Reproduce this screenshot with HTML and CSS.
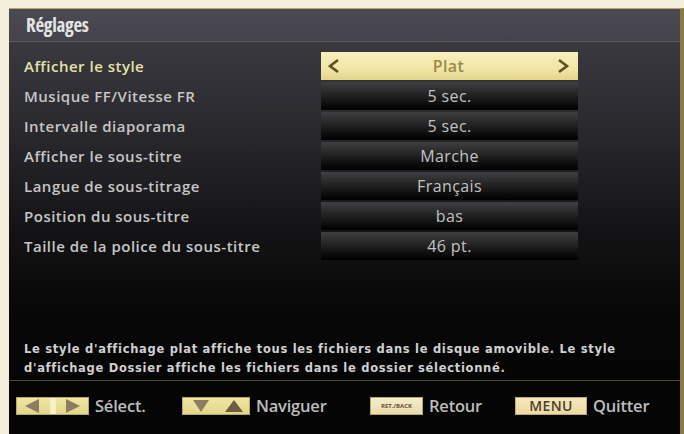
FILE: index.html
```html
<!DOCTYPE html>
<html lang="fr">
<head>
<meta charset="utf-8">
<title>Réglages</title>
<link rel="stylesheet" href="styles.css">
</head>
<body>
<div class="screen">
  <div class="header">Réglages</div>
  <div class="body">
    <div class="rows">
      <div class="row active">
        <div class="label">Afficher le style</div>
        <div class="value sel">
          <svg class="chev" width="12" height="16" viewBox="0 0 12 16"><polyline points="10,2 2,8 10,14" fill="none" stroke="#5f4f20" stroke-width="2.6" stroke-linejoin="miter"/></svg>
          <span class="v">Plat</span>
          <svg class="chev" width="12" height="16" viewBox="0 0 12 16"><polyline points="2,2 10,8 2,14" fill="none" stroke="#5f4f20" stroke-width="2.6" stroke-linejoin="miter"/></svg>
        </div>
      </div>
      <div class="row">
        <div class="label">Musique FF/Vitesse FR</div>
        <div class="value"><span class="v">5 sec.</span></div>
      </div>
      <div class="row">
        <div class="label">Intervalle diaporama</div>
        <div class="value"><span class="v">5 sec.</span></div>
      </div>
      <div class="row">
        <div class="label">Afficher le sous-titre</div>
        <div class="value"><span class="v">Marche</span></div>
      </div>
      <div class="row">
        <div class="label">Langue de sous-titrage</div>
        <div class="value"><span class="v">Français</span></div>
      </div>
      <div class="row">
        <div class="label">Position du sous-titre</div>
        <div class="value"><span class="v">bas</span></div>
      </div>
      <div class="row">
        <div class="label">Taille de la police du sous-titre</div>
        <div class="value"><span class="v">46 pt.</span></div>
      </div>
    </div>
    <p class="desc">Le style d'affichage plat affiche tous les fichiers dans le disque amovible. Le style<br>d'affichage Dossier affiche les fichiers dans le dossier sélectionné.</p>
  </div>
  <div class="footer">
    <div class="item">
      <span class="btn btn-lr">
        <svg width="71" height="16" viewBox="0 0 71 16"><rect x="33" y="0" width="6" height="16" fill="#f6f0c8"/><polygon points="8,8 22,1 22,15" fill="#8c7c62"/><polygon points="63,8 49,1 49,15" fill="#8c7c62"/></svg>
      </span>
      <span class="t">Sélect.</span>
    </div>
    <div class="item">
      <span class="btn btn-ud">
        <svg width="66" height="16" viewBox="0 0 66 16"><polygon points="10,2 26,2 18,14" fill="#8c7c62"/><polygon points="42,14 60,14 51,2" fill="#6e5c44"/></svg>
      </span>
      <span class="t">Naviguer</span>
    </div>
    <div class="item">
      <span class="btn btn-ret">RET./BACK</span>
      <span class="t">Retour</span>
    </div>
    <div class="item">
      <span class="btn btn-menu">MENU</span>
      <span class="t">Quitter</span>
    </div>
  </div>
</div>
</body>
</html>
```
FILE: styles.css
```css
html, body {
  margin: 0;
  padding: 0;
}
body {
  background: #f3eedb;
  width: 684px;
  height: 434px;
  overflow: hidden;
  font-family: "Open Sans", "DejaVu Sans", sans-serif;
}
.screen {
  margin: 8px 0 0 9px;
  width: 671px;
  height: 425px;
  border-top: 1px solid #b9a66a;
  border-right: 4px solid #8c7a44;
  display: flex;
  flex-direction: column;
  background: #050505;
}
.header {
  height: 33px;
  flex: none;
  box-sizing: border-box;
  padding: 2px 0 0 17px;
  background: linear-gradient(#4b4a52, #44434b);
  border-bottom: 1px solid #5c5b63;
  color: #e4e4e4;
  font-family: "Open Sans", sans-serif;
  font-stretch: 75%;
  font-size: 19px;
  font-weight: 700;
  line-height: 28px;
  letter-spacing: -0.3px;
}
.body {
  flex: 1;
  display: flex;
  flex-direction: column;
  background: linear-gradient(to bottom, #3a393f 0%, #2a292e 25%, #141416 55%, #070707 80%, #050505 100%);
  border-bottom: 1px solid #4d483a;
}
.rows {
  padding-top: 10px;
  display: flex;
  flex-direction: column;
  gap: 2px;
}
.row {
  display: grid;
  grid-template-columns: 312px 257px;
  height: 28px;
  align-items: center;
}
.label {
  padding-left: 15px;
  color: #c6c6c6;
  font-size: 15px;
  font-weight: 600;
  letter-spacing: 0.5px;
}
.row.active .label {
  color: #e6e2a8;
}
.value {
  height: 28px;
  display: flex;
  align-items: center;
  justify-content: center;
  background: linear-gradient(to bottom, #404042 0%, #262627 40%, #0c0c0c 80%, #000 100%);
  color: #c2c2c2;
  font-size: 16px;
  font-weight: 500;
  letter-spacing: 0.4px;
}
.value.sel {
  justify-content: space-between;
  padding: 0 9px 0 7px;
  box-sizing: border-box;
  background: linear-gradient(to bottom, #f7efbd 0%, #f1e6a6 60%, #e3d48a 100%);
  color: #9a8a4c;
  font-weight: 600;
}
.desc {
  margin: auto 0 0 0;
  padding: 0 15px 2px 15px;
  color: #d0d0d0;
  font-family: "DejaVu Sans", sans-serif;
  font-size: 11.5px;
  font-weight: 700;
  line-height: 19px;
  letter-spacing: 0.7px;
  white-space: nowrap;
}
.footer {
  height: 53px;
  flex: none;
  display: grid;
  grid-template-columns: 166px 188px 145px auto;
  align-items: center;
  padding-left: 7px;
  padding-bottom: 4px;
  box-sizing: border-box;
}
.item {
  display: flex;
  align-items: center;
  gap: 6px;
}
.btn {
  display: flex;
  align-items: center;
  justify-content: center;
  height: 18px;
  box-sizing: border-box;
  background: linear-gradient(to bottom, #efe6a2, #e2d68a);
  border: 1px solid #b8a862;
}
.btn-lr { width: 73px; }
.btn-ud { width: 68px; }
.btn-ret {
  width: 53px;
  font-size: 6px;
  font-weight: 700;
  color: #6a4e2a;
  background: linear-gradient(to bottom, #f4eccc, #e8dcae);
}
.btn-menu {
  width: 72px;
  font-size: 14px;
  font-weight: 600;
  color: #4a4032;
  background: linear-gradient(to bottom, #f6e8bc, #ecd9a2);
  border-color: #c2a870;
  letter-spacing: 0.3px;
}
.t {
  color: #bdbdbd;
  font-size: 16.5px;
  font-weight: 600;
  letter-spacing: -0.2px;
}
```
